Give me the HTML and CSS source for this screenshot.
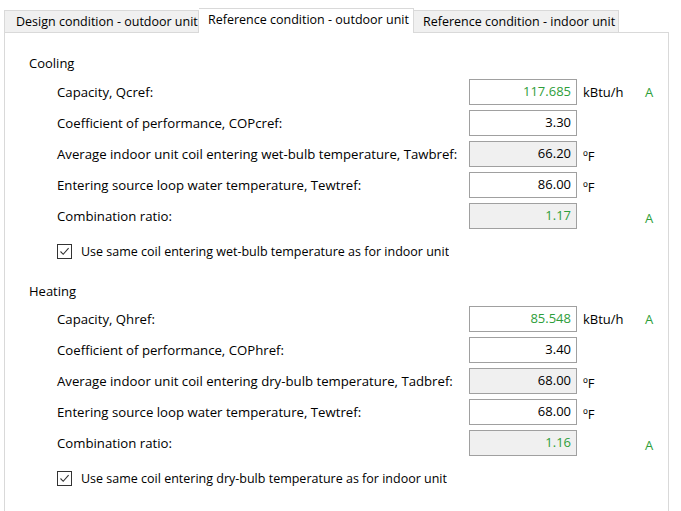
FILE: index.html
```html
<!DOCTYPE html>
<html lang="en">

<head>
    <meta charset="UTF-8">
    <title>Reference condition - outdoor unit</title>
    <link rel="stylesheet" href="styles.css">
</head>

<body>
    <div class="tabs">
        <div class="tab tab-design">Design condition - outdoor unit</div>
        <div class="tab tab-ref-out active">Reference condition - outdoor unit</div>
        <div class="tab tab-ref-in">Reference condition - indoor unit</div>
    </div>

    <div class="panel">
        <!-- Cooling -->
        <div class="section-title">Cooling</div>
        <div class="rows">
            <div class="row">
                <span class="label">Capacity, Qcref:</span>
                <div class="field calc">117.685</div>
                <span class="unit">kBtu/h</span>
                <span class="flag">A</span>
            </div>
            <div class="row">
                <span class="label">Coefficient of performance, COPcref:</span>
                <div class="field">3.30</div>
                <span class="unit"></span>
                <span class="flag"></span>
            </div>
            <div class="row">
                <span class="label">Average indoor unit coil entering wet-bulb temperature, Tawbref:</span>
                <div class="field disabled">66.20</div>
                <span class="unit deg">ºF</span>
                <span class="flag"></span>
            </div>
            <div class="row">
                <span class="label">Entering source loop water temperature, Tewtref:</span>
                <div class="field">86.00</div>
                <span class="unit deg">ºF</span>
                <span class="flag"></span>
            </div>
            <div class="row">
                <span class="label">Combination ratio:</span>
                <div class="field disabled calc">1.17</div>
                <span class="unit"></span>
                <span class="flag low">A</span>
            </div>
        </div>
        <label class="check">
            <span class="box">
                <svg width="13" height="13" viewBox="0 0 13 13">
                    <path d="M2.5 6.5 L5.2 9.3 L10.6 3.2" fill="none" stroke="#333" stroke-width="1.1" />
                </svg>
            </span>
            <span class="check-text">Use same coil entering wet-bulb temperature as for indoor unit</span>
        </label>

        <!-- Heating -->
        <div class="section-title heating">Heating</div>
        <div class="rows">
            <div class="row">
                <span class="label">Capacity, Qhref:</span>
                <div class="field calc">85.548</div>
                <span class="unit">kBtu/h</span>
                <span class="flag">A</span>
            </div>
            <div class="row">
                <span class="label">Coefficient of performance, COPhref:</span>
                <div class="field">3.40</div>
                <span class="unit"></span>
                <span class="flag"></span>
            </div>
            <div class="row">
                <span class="label">Average indoor unit coil entering dry-bulb temperature, Tadbref:</span>
                <div class="field disabled">68.00</div>
                <span class="unit deg">ºF</span>
                <span class="flag"></span>
            </div>
            <div class="row">
                <span class="label">Entering source loop water temperature, Tewtref:</span>
                <div class="field">68.00</div>
                <span class="unit deg">ºF</span>
                <span class="flag"></span>
            </div>
            <div class="row">
                <span class="label">Combination ratio:</span>
                <div class="field disabled calc">1.16</div>
                <span class="unit"></span>
                <span class="flag low">A</span>
            </div>
        </div>
        <label class="check">
            <span class="box">
                <svg width="13" height="13" viewBox="0 0 13 13">
                    <path d="M2.5 6.5 L5.2 9.3 L10.6 3.2" fill="none" stroke="#333" stroke-width="1.1" />
                </svg>
            </span>
            <span class="check-text">Use same coil entering dry-bulb temperature as for indoor unit</span>
        </label>
    </div>
</body>

</html>
```

FILE: styles.css
```css
body {
    margin: 0;
    background-color: #ffffff;
    font-family: "Open Sans", Arial, sans-serif;
    font-size: 13px;
    color: #000;
    height: 511px;
    overflow: hidden;
}

.tabs {
    display: flex;
    align-items: flex-end;
    height: 33px;
    padding-left: 4px;
    position: relative;
    z-index: 1;
}

.tab {
    box-sizing: border-box;
    height: 22px;
    margin-bottom: 1px;
    padding-left: 11px;
    font-size: 12.5px;
    line-height: 21px;
    white-space: nowrap;
    overflow: hidden;
    background-color: #f0f0f0;
    border: 1px solid #d9d9d9;
    border-bottom: none;
}

.tab-design {
    width: 195px;
}

.tab-ref-out {
    width: 215px;
    padding-left: 9px;
}

.tab-ref-in {
    width: 205px;
    padding-left: 9px;
    border-left: none;
}

.tab.active {
    height: 25px;
    margin-bottom: 0;
    line-height: 22px;
    background-color: #ffffff;
    border-left: none;
}

.panel {
    box-sizing: border-box;
    width: 665px;
    height: 500px;
    margin-left: 4px;
    margin-top: -1px;
    padding: 20px 0 0 24px;
    border: 1px solid #d9d9d9;
}

.section-title {
    height: 20px;
    line-height: 20px;
}

.section-title.heating {
    margin-top: 17px;
}

.rows {
    display: flex;
    flex-direction: column;
    gap: 5px;
    margin-top: 6px;
    padding-left: 28px;
}

.section-title.heating + .rows {
    margin-top: 5px;
}

.row {
    display: grid;
    grid-template-columns: 412px 108px 68px 20px;
    align-items: center;
    height: 26px;
}

.label {
    font-size: 13.2px;
}

.field {
    box-sizing: border-box;
    height: 26px;
    padding-right: 5px;
    border: 1px solid #a0a0a0;
    background-color: #ffffff;
    text-align: right;
    line-height: 22px;
}

.field.disabled {
    background-color: #f0f0f0;
}

.field.calc {
    color: #2e9e3a;
}

.unit {
    padding-left: 6px;
}

.unit.deg {
    padding-top: 4px;
}

.flag {
    color: #2e9e3a;
}

.flag.low {
    padding-top: 4px;
}

.check {
    display: flex;
    align-items: center;
    gap: 9px;
    height: 26px;
    margin-top: 9px;
    padding-left: 28px;
}

.box {
    box-sizing: border-box;
    flex: none;
    width: 15px;
    height: 15px;
    border: 1px solid #333;
    display: flex;
}

.box svg {
    display: block;
}

.check-text {
    max-width: 371px;
    font-size: 12.5px;
    white-space: nowrap;
    overflow: hidden;
}
```
